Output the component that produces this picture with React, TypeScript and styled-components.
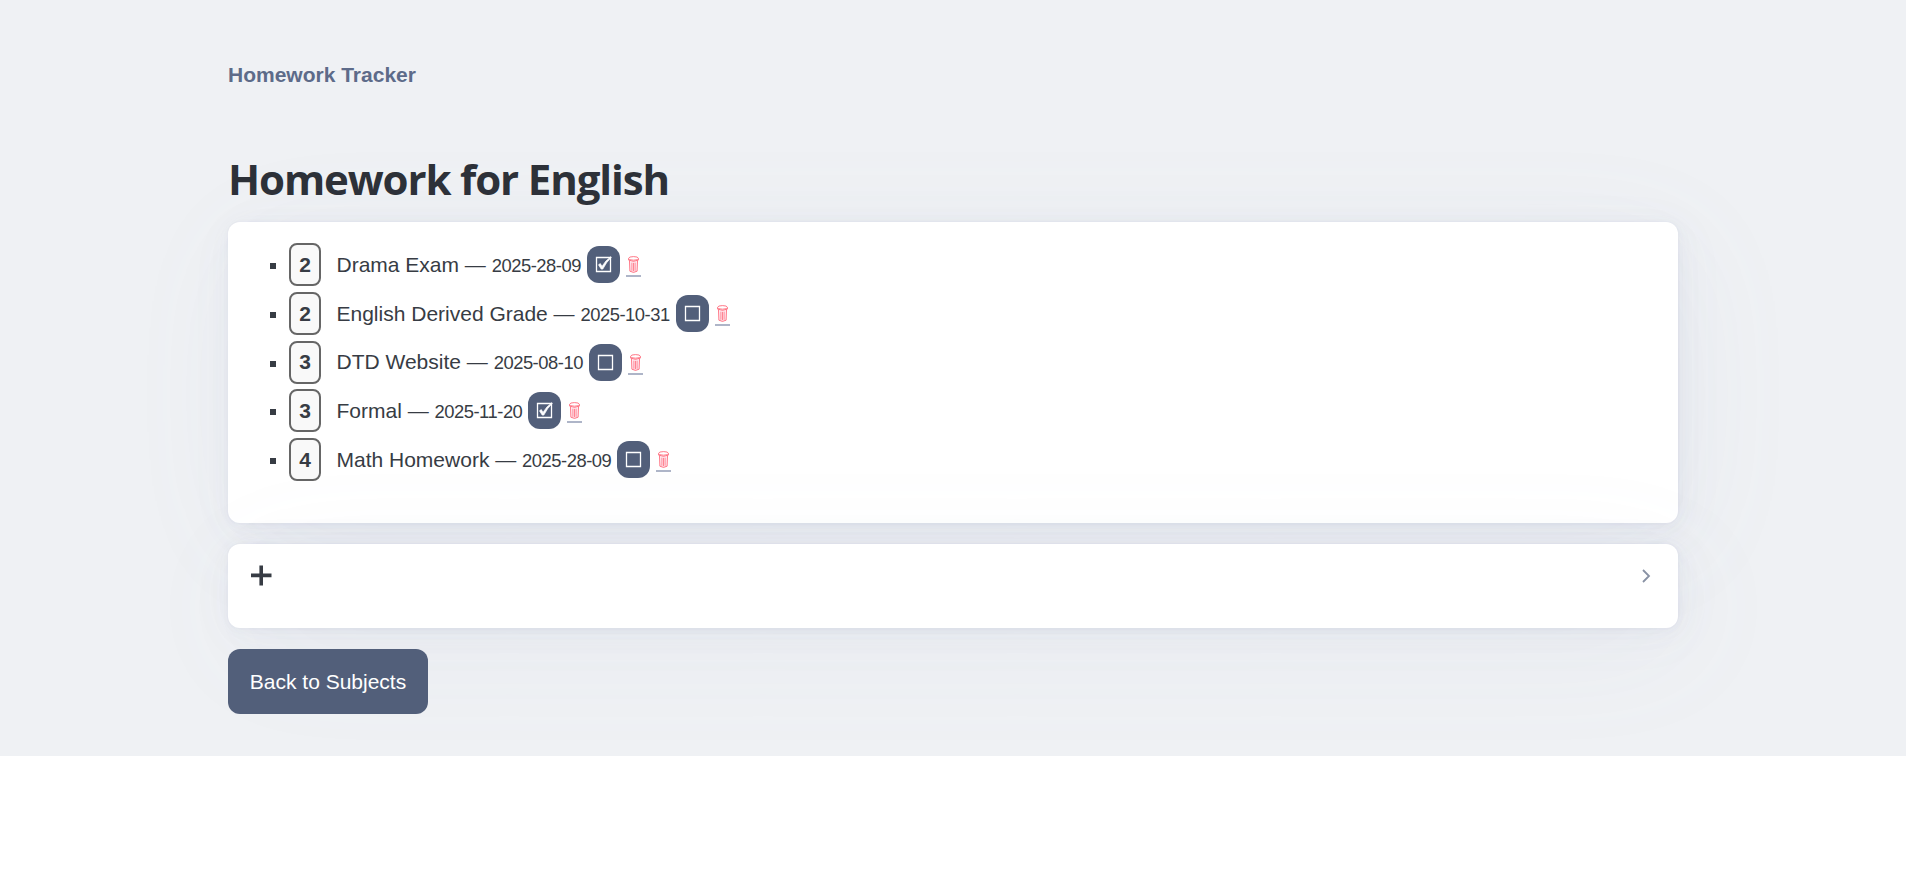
import React from 'react';
import styled, { createGlobalStyle } from 'styled-components';

const GlobalStyle = createGlobalStyle`
  *, *::before, *::after { box-sizing: border-box; }
  html { font-size: 21px; background: #fff; }
  body {
    margin: 0;
    color: #373c44;
    font-family: "Liberation Sans", Arial, sans-serif;
    line-height: 1.5;
  }
`;

const Page = styled.div`
  height: 756px;
  background: #eff1f4;
`;

const Container = styled.div`
  width: 1450px;
  margin: 0 auto;
  display: flex;
  flex-direction: column;
  align-items: stretch;
`;

const Header = styled.header`
  padding: 59px 0 0;
  height: 153px;
`;

const Brand = styled.a`
  color: #5d6b89;
  font-weight: 700;
  text-decoration: none;
`;

const Title = styled.h1`
  margin: 0;
  height: 69px;
  color: #2d3138;
  font-family: "Open Sans", "Noto Sans", sans-serif;
  font-size: 42px;
  font-weight: 700;
  letter-spacing: -1.12px;
  line-height: 51px;
`;

const Card = styled.article<{ $height: number }>`
  height: ${(p) => p.$height}px;
  padding: 21px;
  margin-bottom: 21px;
  border-radius: 12px;
  background: #fff;
  box-shadow:
    0.0145rem 0.029rem 0.174rem rgba(129, 145, 181, 0.01698),
    0.0335rem 0.067rem 0.402rem rgba(129, 145, 181, 0.024),
    0.0625rem 0.125rem 0.75rem rgba(129, 145, 181, 0.03),
    0.1125rem 0.225rem 1.35rem rgba(129, 145, 181, 0.036),
    0.2085rem 0.417rem 2.502rem rgba(129, 145, 181, 0.04302),
    0.5rem 1rem 6rem rgba(129, 145, 181, 0.06),
    0 0 0 0.0625rem rgba(129, 145, 181, 0.015);
`;

const List = styled.ul`
  margin: 0;
  padding: 0 0 0 21px;
  list-style: none;
`;

const Item = styled.li`
  display: flex;
  align-items: center;
  height: 43px;
  margin-bottom: 5.75px;
  white-space: pre;

  &::before {
    content: "";
    width: 6px;
    height: 6px;
    margin: 3px 13px 0 0;
    background: #373c44;
  }
`;

const Priority = styled.strong`
  display: flex;
  align-items: center;
  justify-content: center;
  width: 32px;
  height: 43px;
  margin-right: 15.5px;
  border: 2px solid #666;
  border-radius: 8px;
  background: #f9f9f9;
`;

const DueDate = styled.small`
  font-size: 18.375px;
  letter-spacing: -0.47px;
`;

const Toggle = styled.button`
  display: flex;
  align-items: center;
  justify-content: center;
  width: 33px;
  height: 37px;
  margin: 0 6px;
  padding: 0;
  border: 0;
  border-radius: 12px;
  background: #525f7a;
  color: #fff;
`;

const Remove = styled.a`
  display: flex;
  flex-direction: column;
  justify-content: flex-end;
  align-items: center;
  width: 15px;
  height: 21px;
  margin-top: 4px;
  border-bottom: 2px solid #aeb5c8;

  svg {
    flex-shrink: 0;
    margin-bottom: 2px;
  }
`;

const Summary = styled.div`
  display: flex;
  align-items: center;
  justify-content: space-between;
  height: 21px;
`;

const Chevron = styled.svg`
  margin-right: -1px;
`;

const BackButton = styled.a`
  align-self: flex-start;
  display: flex;
  align-items: center;
  justify-content: center;
  width: 200px;
  height: 65px;
  border-radius: 12px;
  background: #525f7a;
  color: #fff;
  text-decoration: none;
`;

const CheckIcon = ({ checked }: { checked: boolean }) => (
  <svg width="17" height="17" viewBox="0 0 17 17" fill="none" stroke="#fff">
    <path d="M1.5 1.5h14v14h-14z" strokeWidth="1.3" />
    {checked && (
      <path d="M3.5 8.8 5.3 7.6 7 10.4Q10.2 4.6 15.9.7L16.4 1.2Q11.2 6.2 7.8 13.1H6.2Z" fill="#fff" strokeWidth=".7" />
    )}
  </svg>
);

const TrashIcon = () => (
  <svg width="11" height="17" viewBox="0 0 11 17" fill="none" stroke="#ff5668" strokeWidth="0.8">
    <path d="M1.5 4.4 1.9 15.2Q5.5 17.6 9.1 15.2L9.5 4.4" fill="#fff0f6" />
    <path d="M3.9 6.6v8.2M5.5 6.8v8.4M7.1 6.6v8.2" strokeWidth="0.7" />
    <path d="M.6 2.6v1.5Q5.5 6.6 10.4 4.1V2.6" fill="#fff" />
    <ellipse cx="5.5" cy="2.4" rx="4.9" ry="1.8" fill="#fff" />
  </svg>
);

const homework = [
  { priority: 2, name: 'Drama Exam', due: '2025-28-09', done: true },
  { priority: 2, name: 'English Derived Grade', due: '2025-10-31', done: false },
  { priority: 3, name: 'DTD Website', due: '2025-08-10', done: false },
  { priority: 3, name: 'Formal', due: '2025-11-20', done: true },
  { priority: 4, name: 'Math Homework', due: '2025-28-09', done: false },
];

export default function App() {
  return (
    <>
      <GlobalStyle />
      <Page>
        <Container>
          <Header><Brand>Homework Tracker</Brand></Header>
          <Title>Homework for English</Title>
          <Card $height={301}>
            <List>
              {homework.map((h) => (
                <Item key={h.name}>
                  <Priority>{h.priority}</Priority>
                  <span>{h.name} — <DueDate>{h.due}</DueDate></span>
                  <Toggle aria-label="Toggle done"><CheckIcon checked={h.done} /></Toggle>
                  <Remove aria-label="Delete"><TrashIcon /></Remove>
                </Item>
              ))}
            </List>
          </Card>
          <Card $height={84}>
            <Summary>
              <svg width="24" height="24" viewBox="0 0 24 24" stroke="#373c44" strokeWidth="3.6">
                <path d="M2 11.4h20.5M12.2 1.5v20" />
              </svg>
              <Chevron width="24" height="24" viewBox="0 0 24 24" fill="none" stroke="#8891a4" strokeWidth="1.8">
                <path d="m9 18 6-6-6-6" />
              </Chevron>
            </Summary>
          </Card>
          <BackButton>Back to Subjects</BackButton>
        </Container>
      </Page>
    </>
  );
}
